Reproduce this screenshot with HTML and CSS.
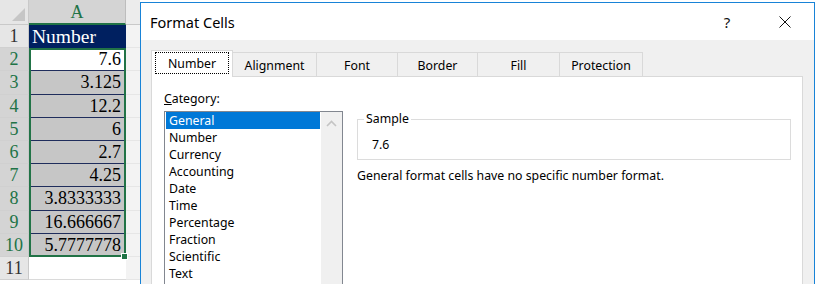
FILE: index.html
```html
<!DOCTYPE html>
<html lang="en">
<head>
    <meta charset="UTF-8">
    <meta name="viewport" content="width=device-width, initial-scale=1.0">
    <title>Format Cells</title>
    <link rel="stylesheet" href="styles.css">
</head>
<body>
    <div class="screen">
        <!-- worksheet behind the dialog -->
        <div class="sheet">
            <div class="col heads">
                <div class="corner"><span class="tri"></span></div>
                <div class="rowhead">1</div>
                <div class="rowhead sel">2</div>
                <div class="rowhead sel">3</div>
                <div class="rowhead sel">4</div>
                <div class="rowhead sel">5</div>
                <div class="rowhead sel">6</div>
                <div class="rowhead sel">7</div>
                <div class="rowhead sel">8</div>
                <div class="rowhead sel">9</div>
                <div class="rowhead sel">10</div>
                <div class="rowhead">11</div>
            </div>
            <div class="col col-a">
                <div class="colhead sel">A</div>
                <div class="cell head-cell">Number</div>
                <div class="selection">
                    <div class="cell num active">7.6</div>
                    <div class="cell num">3.125</div>
                    <div class="cell num">12.2</div>
                    <div class="cell num">6</div>
                    <div class="cell num">2.7</div>
                    <div class="cell num">4.25</div>
                    <div class="cell num">3.8333333</div>
                    <div class="cell num">16.666667</div>
                    <div class="cell num">5.7777778</div>
                </div>
                <div class="cell"></div>
            </div>
            <div class="col col-b">
                <div class="colhead"></div>
                <div class="cell"></div>
                <div class="cell"></div>
                <div class="cell"></div>
                <div class="cell"></div>
                <div class="cell"></div>
                <div class="cell"></div>
                <div class="cell"></div>
                <div class="cell"></div>
                <div class="cell"></div>
                <div class="cell"></div>
                <div class="cell"></div>
            </div>
        </div>

        <!-- Format Cells dialog -->
        <div class="dialog">
            <div class="titlebar">
                <div class="dlg-title">Format Cells</div>
                <div class="tbtn help">?</div>
                <div class="tbtn close">
                    <svg width="12" height="12" viewBox="0 0 12 12">
                        <path d="M0.5 0.5 L11.5 11.5 M11.5 0.5 L0.5 11.5" stroke="#111" stroke-width="1" fill="none"/>
                    </svg>
                </div>
            </div>
            <div class="dlg-body">
                <div class="tabs">
                    <div class="tab active w-number"><span class="focus">Number</span></div>
                    <div class="tab w-align">Alignment</div>
                    <div class="tab w-font">Font</div>
                    <div class="tab w-border">Border</div>
                    <div class="tab w-fill">Fill</div>
                    <div class="tab w-prot">Protection</div>
                </div>
                <div class="panel">
                    <div class="category">
                        <div class="label"><u>C</u>ategory:</div>
                        <div class="listbox">
                            <div class="items">
                                <div class="item selected">General</div>
                                <div class="item">Number</div>
                                <div class="item">Currency</div>
                                <div class="item">Accounting</div>
                                <div class="item">Date</div>
                                <div class="item">Time</div>
                                <div class="item">Percentage</div>
                                <div class="item">Fraction</div>
                                <div class="item">Scientific</div>
                                <div class="item">Text</div>
                            </div>
                            <div class="scrollbar">
                                <svg width="11" height="7" viewBox="0 0 11 7">
                                    <path d="M1 6 L5.5 1.5 L10 6" stroke="#c4c4c4" stroke-width="1.6" fill="none"/>
                                </svg>
                            </div>
                        </div>
                    </div>
                    <div class="details">
                        <fieldset class="sample">
                            <legend>Sample</legend>
                            <div class="sample-value">7.6</div>
                        </fieldset>
                        <div class="desc">General format cells have no specific number format.</div>
                    </div>
                </div>
            </div>
        </div>
    </div>
</body>
</html>
```

FILE: styles.css
```css
body {
    margin: 0;
    padding: 0;
    background-color: #ffffff;
    overflow: hidden;
}
.screen {
    display: flex;
    width: 816px;
    height: 284px;
    overflow: hidden;
}

/* worksheet */
.sheet {
    display: flex;
    width: 140px;
    flex-shrink: 0;
    font-family: "Liberation Serif", "Times New Roman", serif;
    font-size: 18px;
}
.col {
    display: flex;
    flex-direction: column;
}
.heads {
    width: 29px;
}
.col-a {
    width: 97px;
}
.col-b {
    width: 14px;
}
.corner, .colhead {
    height: 25px;
    box-sizing: border-box;
    flex-shrink: 0;
}
.corner {
    position: relative;
    background-color: #e6e6e6;
    border-right: 1px solid #c9c9c9;
    border-bottom: 1px solid #c9c9c9;
}
.tri {
    position: absolute;
    right: 3px;
    bottom: 3px;
    width: 0;
    height: 0;
    border-left: 13px solid transparent;
    border-bottom: 13px solid #c6c6c6;
}
.colhead {
    background-color: #e9e9e9;
    border-bottom: 1px solid #c9c9c9;
    text-align: center;
    line-height: 24px;
}
.colhead.sel {
    background-color: #d4d4d4;
    color: #217346;
    border-bottom: 2px solid #217346;
    border-right: 1px solid #bdbdbd;
}
.rowhead, .cell {
    height: 23.2px;
    box-sizing: border-box;
    flex-shrink: 0;
}
.rowhead {
    background-color: #e6e6e6;
    border-bottom: 1px solid #d0d0d0;
    border-right: 1px solid #c9c9c9;
    color: #333;
    text-align: center;
    line-height: 23px;
}
.rowhead.sel {
    background-color: #d4d4d4;
    color: #217346;
}
.cell {
    border-bottom: 1px solid #dadada;
    line-height: 23px;
    padding: 0 5px;
    white-space: nowrap;
}
.col-b .cell {
    background-color: #f3f3f3;
    border-bottom-color: #e6e6e6;
}
.col-b .colhead {
    background-color: #ececec;
}
.head-cell {
    background-color: #002060;
    color: #ffffff;
    border-bottom: none;
    padding-left: 3px;
    font-size: 19.5px;
}
.selection {
    position: relative;
    outline: 2px solid #217346;
    outline-offset: -2px;
}
.selection::after {
    content: "";
    position: absolute;
    right: -2px;
    bottom: -3px;
    width: 5px;
    height: 5px;
    background-color: #217346;
    border: 1px solid #ffffff;
}
.num {
    text-align: right;
    background-color: #c6c6c6;
    border-bottom: 1px solid #1f2d5c;
    color: #000;
}
.num.active {
    background-color: #ffffff;
}

/* dialog */
.dialog {
    flex: 1;
    margin-top: 2px;
    margin-right: 1px;
    border: 1px solid #1883d7;
    border-bottom: none;
    background-color: #f0f0f0;
    display: flex;
    flex-direction: column;
    font-family: "Noto Sans", "Open Sans", sans-serif;
    color: #000;
}
.titlebar {
    height: 37px;
    flex-shrink: 0;
    background-color: #ffffff;
    display: flex;
    align-items: center;
    padding-left: 9px;
}
.dlg-title {
    flex: 1;
    font-size: 14.5px;
    color: #000;
}
.tbtn {
    width: 58px;
    height: 37px;
    display: flex;
    align-items: center;
    justify-content: center;
}
.help {
    font-size: 15px;
    color: #111;
}
.dlg-body {
    flex: 1;
    display: flex;
    flex-direction: column;
    padding: 10px 11px 0 10px;
}
.tabs {
    display: flex;
    align-items: flex-end;
    height: 26px;
    font-size: 12.3px;
    flex-shrink: 0;
}
.tab {
    height: 24px;
    box-sizing: border-box;
    border: 1px solid #d9d9d9;
    border-bottom: none;
    margin-left: -1px;
    display: flex;
    align-items: center;
    justify-content: center;
    padding-top: 1px;
    background-color: #f0f0f0;
}
.tab.active {
    height: 27px;
    margin-bottom: -1px;
    margin-left: 0;
    background-color: #ffffff;
    position: relative;
    z-index: 1;
    align-items: flex-start;
    padding-top: 1px;
}
.focus {
    width: 74px;
    height: 22px;
    box-sizing: border-box;
    border: 1px dotted #000;
    display: flex;
    align-items: center;
    justify-content: center;
    padding-top: 1px;
}
.w-number { width: 82px; }
.w-align { width: 85px; }
.w-font { width: 82px; }
.w-border { width: 81px; }
.w-fill { width: 83px; }
.w-prot { width: 84px; }

.panel {
    flex: 1;
    display: flex;
    background-color: #ffffff;
    border: 1px solid #d9d9d9;
    border-bottom: none;
    padding: 14px 11px 0 12px;
    font-size: 12.3px;
}
.category {
    width: 179px;
    flex-shrink: 0;
}
.label {
    line-height: 16px;
}
.listbox {
    margin-top: 4px;
    height: 200px;
    border: 1px solid #828790;
    display: flex;
}
.items {
    flex: 1;
    padding: 0 1px;
}
.item {
    height: 17px;
    line-height: 18px;
    padding-left: 3px;
}
.item.selected {
    background-color: #0078d7;
    color: #ffffff;
}
.scrollbar {
    width: 21px;
    background-color: #f0f0f0;
    display: flex;
    justify-content: center;
    align-items: flex-start;
    padding-top: 8px;
    box-sizing: border-box;
}
.details {
    flex: 1;
    margin-left: 14px;
}
.sample {
    margin: 20px 0 0;
    border: 1px solid #dcdcdc;
    padding: 10px 14px 6px;
}
.sample legend {
    padding: 0 2px;
    margin-left: -8px;
    line-height: 16px;
}
.sample-value {
    line-height: 16px;
}
.desc {
    margin-top: 8px;
    line-height: 16px;
}
```
